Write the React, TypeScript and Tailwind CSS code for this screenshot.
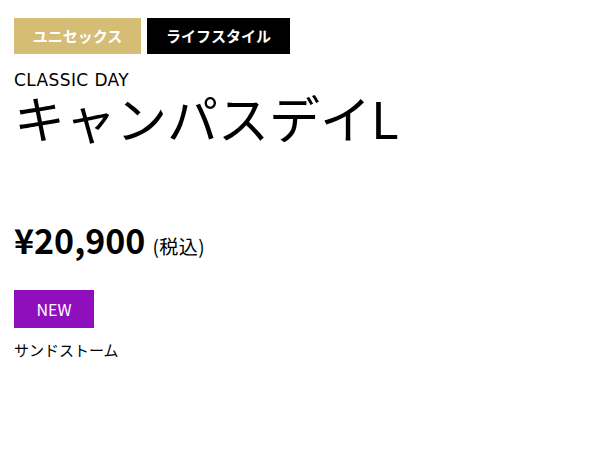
export default function App() {
  const font = { fontFamily: '"Noto Sans CJK JP", "Noto Sans", sans-serif' };
  return (
    <div className="w-[600px] h-[450px] bg-white px-[14px] pt-[18px] text-black" style={font}>
      <div className="flex gap-[6px]">
        <span className="flex h-9 w-[127px] items-center justify-center bg-[#d6bd76] text-[15px] font-bold text-white">ユニセックス</span>
        <span className="flex h-9 w-[143px] items-center justify-center bg-black text-[15px] font-bold text-white">ライフスタイル</span>
      </div>
      <p className="mt-[16px] text-[17px] leading-5 tracking-[0.4px]" style={{ fontFamily: '"DejaVu Sans", sans-serif' }}>CLASSIC DAY</p>
      <h1 className="text-[51px] leading-[54px]">キャンパスデイL</h1>
      <div className="mt-[76px] flex items-baseline gap-[7px]">
        <span className="text-[34px] font-bold leading-10">¥20,900</span>
        <span className="text-[19px] tracking-[0.5px]">(税込)</span>
      </div>
      <div className="mt-[29px] flex h-[38px] w-20 items-center justify-center bg-[#900fbd] text-[16px] text-white">NEW</div>
      <p className="mt-[10px] text-[15px] leading-6">サンドストーム</p>
    </div>
  );
}
